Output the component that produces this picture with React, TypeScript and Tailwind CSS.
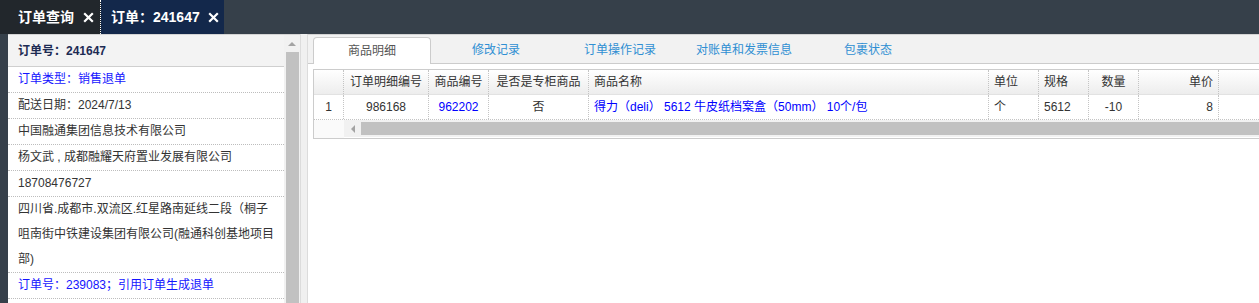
import React from "react";

const XIcon = () => (
  <svg width="11" height="11" viewBox="0 0 11 11" className="block">
    <path d="M1.2 1.2 L9.8 9.8 M9.8 1.2 L1.2 9.8" stroke="white" strokeWidth="2.2" strokeLinecap="butt" />
  </svg>
);

const cols = [
  { w: 30, h: "", hAlign: "text-center" },
  { w: 85, h: "订单明细编号", hAlign: "text-center" },
  { w: 60, h: "商品编号", hAlign: "text-center" },
  { w: 100, h: "是否是专柜商品", hAlign: "text-center" },
  { w: 400, h: "商品名称", hAlign: "text-left" },
  { w: 50, h: "单位", hAlign: "text-left" },
  { w: 50, h: "规格", hAlign: "text-left" },
  { w: 50, h: "数量", hAlign: "text-center" },
  { w: 80, h: "单价", hAlign: "text-right" },
  { w: 120, h: "", hAlign: "text-left" },
];

const row = [
  { v: "1", c: "text-[#333] text-center" },
  { v: "986168", c: "text-[#333] text-center" },
  { v: "962202", c: "text-[#0000ff] text-center" },
  { v: "否", c: "text-[#333] text-center" },
  { v: "得力（deli） 5612 牛皮纸档案盒（50mm） 10个/包", c: "text-[#0000ff] text-left" },
  { v: "个", c: "text-[#333] text-left" },
  { v: "5612", c: "text-[#333] text-left" },
  { v: "-10", c: "text-[#333] text-center" },
  { v: "8", c: "text-[#333] text-right" },
  { v: "", c: "" },
];

export default function App() {
  const leftRows: { t: string; blue?: boolean }[] = [
    { t: "订单类型：销售退单", blue: true },
    { t: "配送日期：2024/7/13" },
    { t: "中国融通集团信息技术有限公司" },
    { t: "杨文武 , 成都融耀天府置业发展有限公司" },
    { t: "18708476727" },
    { t: "四川省.成都市.双流区.红星路南延线二段（桐子咀南街中铁建设集团有限公司(融通科创基地项目部)" },
    { t: "订单号：239083；引用订单生成退单", blue: true },
  ];
  const tabs = ["商品明细", "修改记录", "订单操作记录", "对账单和发票信息", "包裹状态"];

  return (
    <div className="w-[1259px] h-[303px] overflow-hidden bg-[#36404a] flex flex-col font-['Liberation_Sans','Noto_Sans_CJK_SC',sans-serif]">
      {/* top tabs */}
      <div className="h-[34px] flex shrink-0">
        <div className="h-full flex items-center bg-[#22272c] pl-[18px] pr-[6px] border-r border-dotted border-white">
          <span className="text-white text-[14px] font-bold leading-none">订单查询</span>
          <span className="ml-[9px]"><XIcon /></span>
        </div>
        <div className="h-full flex items-center bg-[#13284b] pl-[10px] pr-[5px]">
          <span className="text-white text-[14px] font-bold leading-none">订单：241647</span>
          <span className="ml-[8px]"><XIcon /></span>
        </div>
      </div>

      {/* main */}
      <div className="flex flex-1 min-h-0 pl-[8px]">
        {/* left panel */}
        <div className="w-[276px] bg-white border-t border-[#d4d4d4] flex flex-col">
          <div className="h-[32px] bg-[#f3f3f3] border-b border-[#cfcfcf] flex items-center pl-[10px] shrink-0">
            <span className="text-[12px] font-bold text-[#1d2b53]">订单号：241647</span>
          </div>
          {leftRows.map((r, i) => (
            <div
              key={i}
              className={`pl-[10px] pr-[8px] text-[12px] leading-[25px] border-b border-dotted border-[#bdbdbd] ${r.blue ? "text-[#1414ff]" : "text-[#333]"}`}
            >
              {r.t}
            </div>
          ))}
        </div>

        {/* scrollbar */}
        <div className="w-[16px] bg-[#f1f1f1] border-t border-[#d4d4d4] flex flex-col items-center">
          <div className="h-[17px] flex items-center justify-center">
            <div className="w-0 h-0 border-l-[4px] border-r-[4px] border-b-[4px] border-l-transparent border-r-transparent border-b-[#a3a3a3]" />
          </div>
          <div className="w-[13px] flex-1 bg-[#c1c1c1]" />
        </div>

        {/* splitter */}
        <div className="w-[7px] bg-[#f0f0f0] border-l border-[#dcdcdc]" />

        {/* right panel */}
        <div className="flex-1 min-w-0 bg-white border-l border-[#dcdcdc] border-t border-t-[#d4d4d4] flex flex-col overflow-hidden">
          <div className="h-[29px] bg-[#f2f2f2] border-b border-[#cccccc] flex items-end pl-[5px] gap-[6px] shrink-0">
            {tabs.map((t, i) =>
              i === 0 ? (
                <div
                  key={t}
                  className="w-[118px] h-[27px] relative top-px bg-white border border-b-0 border-[#cccccc] rounded-t-[4px] flex items-center justify-center text-[12px] text-[#555]"
                >
                  {t}
                </div>
              ) : (
                <div key={t} className="w-[118px] h-[27px] flex items-center justify-center text-[12px] text-[#2f8fd3]">
                  {t}
                </div>
              )
            )}
          </div>

          {/* table */}
          <div className="mt-[5px] ml-[5px] w-[1100px] border-t border-l border-b border-[#cccccc] shrink-0">
            <div className="flex h-[25px] bg-gradient-to-b from-white to-[#ededed] border-b border-[#e2e2e2]">
              {cols.map((c, i) => (
                <div
                  key={i}
                  style={{ width: c.w }}
                  className={`shrink-0 h-full border-r border-dotted border-[#c4c4c4] px-[5px] text-[12px] text-[#333] leading-[24px] ${c.hAlign}`}
                >
                  {c.h}
                </div>
              ))}
            </div>
            <div className="flex h-[25px] border-b border-dotted border-[#c4c4c4]">
              {cols.map((c, i) => (
                <div
                  key={i}
                  style={{ width: c.w }}
                  className={`shrink-0 h-full border-r border-dotted border-[#c4c4c4] px-[5px] text-[12px] leading-[24px] whitespace-nowrap ${row[i].c}`}
                >
                  {row[i].v}
                </div>
              ))}
            </div>
            <div className="flex h-[18px] items-start">
              <div className="w-[30px] h-full bg-[#fafafa]" />
              <div className="flex-1 h-[17px] bg-[#f1f1f1] flex items-center">
                <div className="w-[17px] h-full flex items-center justify-center">
                  <div className="w-0 h-0 border-t-[4px] border-b-[4px] border-r-[4px] border-t-transparent border-b-transparent border-r-[#a3a3a3]" />
                </div>
                <div className="flex-1 h-[13px] bg-[#c1c1c1]" />
              </div>
            </div>
          </div>
        </div>
      </div>
    </div>
  );
}
